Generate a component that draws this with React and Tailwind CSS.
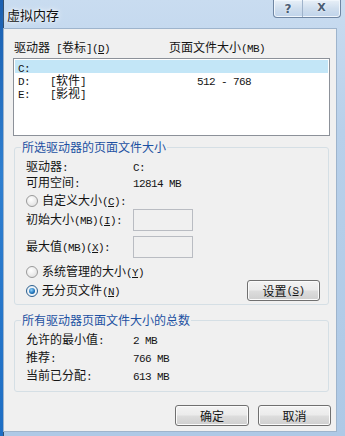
import React from "react";

// splits a label into CJK / ascii runs, "&" marks the underlined access key
function Txt({ s }) {
  const runs = [];
  let buf = "";
  let ascii = null;
  let under = false;
  const flush = () => {
    if (buf) runs.push({ t: buf, a: ascii });
    buf = "";
  };
  for (const ch of s) {
    if (ch === "&") {
      under = true;
      continue;
    }
    const isA = ch.charCodeAt(0) < 128;
    if (under) {
      flush();
      runs.push({ t: ch, a: isA, u: true });
      under = false;
      ascii = null;
      continue;
    }
    if (ascii !== null && ascii !== isA) flush();
    ascii = isA;
    buf += ch;
  }
  flush();
  return (
    <>
      {runs.map((r, i) => (
        <span
          key={i}
          className={
            (r.a
              ? "font-['Liberation_Mono',monospace] text-[11px] tracking-[-0.6px]"
              : "") + (r.u ? " underline underline-offset-1" : "")
          }
        >
          {r.t}
        </span>
      ))}
    </>
  );
}

function Radio({ checked }) {
  return (
    <span
      className={
        checked
          ? "w-[12px] h-[12px] rounded-full border border-[#2c5f8f] bg-[radial-gradient(circle,#ffffff_0%,#dfe8ef_100%)] flex items-center justify-center"
          : "w-[12px] h-[12px] rounded-full border border-[#9a9a9a] bg-[radial-gradient(circle_at_40%_35%,#ffffff_0%,#dadada_100%)]"
      }
    >
      {checked && (
        <span className="w-[6px] h-[6px] rounded-full bg-[radial-gradient(circle_at_40%_35%,#8fd2ff_0%,#1b6fb5_60%,#0c3f74_100%)]" />
      )}
    </span>
  );
}

function Btn({ children, w }) {
  return (
    <div
      className={
        "h-[21px] rounded-[3px] border border-[#707070] bg-[linear-gradient(#f3f3f3_0%,#ebebeb_48%,#dddddd_52%,#cfcfcf_100%)] shadow-[inset_0_0_0_1px_#fbfbfb] flex items-center justify-center " +
        w
      }
    >
      {children}
    </div>
  );
}

function Group({ label, h, children }) {
  return (
    <div className={"relative ml-[10px] w-[315px] rounded-[3px] border border-[#d5dfe5] " + h}>
      <div className="absolute left-[6px] top-[-9px] px-[1px] bg-[#f0f0f0] leading-[16px] text-[#1d50a2]">
        <Txt s={label} />
      </div>
      {children}
    </div>
  );
}

export default function App() {
  const drives = [
    { d: "C:", l: "", s: "", sel: true },
    { d: "D:", l: "[软件]", s: "512 - 768" },
    { d: "E:", l: "[影视]", s: "" },
  ];
  return (
    <div className="w-[345px] h-[436px] flex overflow-hidden font-['Noto_Sans_CJK_SC',sans-serif] text-[12px] text-[#141414]">
      <div className="w-[4px] h-full bg-[linear-gradient(#1a5fb0,#2f7fd0_40%,#1e6ec4)] border-r border-[#34506e]" />
      <div className="flex-1 flex flex-col bg-[linear-gradient(#c9dcf0,#b8d0ea_30%,#aec9e6)]">
        {/* title bar */}
        <div className="h-[28px] flex justify-between pl-[3px] pr-[4px]">
          <div className="pt-[6px] text-[13px] leading-[18px] text-[#111] [text-shadow:0_0_6px_#fff,0_0_3px_#fff]">
            虚拟内存
          </div>
          <div className="h-[18px] w-[68px] flex rounded-b-[4px] border border-t-0 border-[#6f86a3] bg-[linear-gradient(#e8f0f8,#cfdeee_50%,#bfd3ea)] shadow-[inset_0_0_0_1px_#f0f6fc]">
            <div className="w-[29px] flex items-center justify-center border-r border-[#9fb3cb] text-[12px] font-bold text-[#4a5d74] font-['DejaVu_Sans',sans-serif] [text-shadow:0_0_2px_#fff]">
              ?
            </div>
            <div className="flex-1 flex items-center justify-center text-[11px] font-bold text-[#4a5d74] font-['DejaVu_Sans',sans-serif] [text-shadow:0_0_2px_#fff]">
              X
            </div>
          </div>
        </div>

        {/* dialog body */}
        <div className="w-[334px] h-[404px] ml-[-1px] border border-[#9eb4cc] bg-[#f0f0f0] flex flex-col">
          <div className="mt-[10px] ml-[10px] flex leading-[16px]">
            <div className="w-[155px]">
              <Txt s="驱动器 [卷标](&D)" />
            </div>
            <div>
              <Txt s="页面文件大小(MB)" />
            </div>
          </div>

          <div className="ml-[9px] mt-[1px] w-[317px] h-[78px] border border-[#8c9199] bg-white p-[1px]">
            {drives.map((r) => (
              <div
                key={r.d}
                className={
                  "flex h-[13px] leading-[13px] pl-[3px] " + (r.sel ? "bg-[#c3e6f7]" : "")
                }
              >
                <div className="w-[32px]">
                  <Txt s={r.d} />
                </div>
                <div className="w-[147px]">
                  <Txt s={r.l} />
                </div>
                <div>
                  <Txt s={r.s} />
                </div>
              </div>
            ))}
          </div>

          <div className="mt-[11px]">
            <Group label="所选驱动器的页面文件大小" h="h-[158px]">
              <div className="pl-[11px] pr-[8px] pt-[10px] flex flex-col leading-[16px]">
                <div className="flex h-[16px]">
                  <div className="w-[107px]"><Txt s="驱动器:" /></div>
                  <div><Txt s="C:" /></div>
                </div>
                <div className="flex h-[16px]">
                  <div className="w-[107px]"><Txt s="可用空间:" /></div>
                  <div><Txt s="12814 MB" /></div>
                </div>
                <div className="mt-[3px] flex items-center h-[16px] gap-[4px]">
                  <Radio />
                  <span><Txt s="自定义大小(&C):" /></span>
                </div>
                <div className="flex items-center h-[22px]">
                  <div className="w-[107px]"><Txt s="初始大小(MB)(&I):" /></div>
                  <div className="w-[60px] h-[22px] border border-[#b9bcc2] bg-[#f0f0f0]" />
                </div>
                <div className="mt-[5px] flex items-center h-[22px]">
                  <div className="w-[107px]"><Txt s="最大值(MB)(&X):" /></div>
                  <div className="w-[60px] h-[22px] border border-[#b9bcc2] bg-[#f0f0f0]" />
                </div>
                <div className="mt-[6px] flex items-center h-[16px] gap-[4px]">
                  <Radio />
                  <span><Txt s="系统管理的大小(&Y)" /></span>
                </div>
                <div className="flex items-center justify-between h-[21px]">
                  <div className="flex items-center gap-[4px]">
                    <Radio checked />
                    <span><Txt s="无分页文件(&N)" /></span>
                  </div>
                  <Btn w="w-[73px]">
                    <Txt s="设置(&S)" />
                  </Btn>
                </div>
              </div>
            </Group>
          </div>

          <div className="mt-[15px]">
            <Group label="所有驱动器页面文件大小的总数" h="h-[72px]">
              <div className="pl-[11px] pt-[9px] flex flex-col leading-[18px]">
                <div className="flex h-[18px]">
                  <div className="w-[107px]"><Txt s="允许的最小值:" /></div>
                  <div><Txt s="2 MB" /></div>
                </div>
                <div className="flex h-[18px]">
                  <div className="w-[107px]"><Txt s="推荐:" /></div>
                  <div><Txt s="766 MB" /></div>
                </div>
                <div className="flex h-[18px]">
                  <div className="w-[107px]"><Txt s="当前已分配:" /></div>
                  <div><Txt s="613 MB" /></div>
                </div>
              </div>
            </Group>
          </div>

          <div className="mt-[13px] flex justify-end gap-[9px] pr-[5px]">
            <Btn w="w-[74px]">确定</Btn>
            <Btn w="w-[73px]">取消</Btn>
          </div>
        </div>
      </div>
    </div>
  );
}
